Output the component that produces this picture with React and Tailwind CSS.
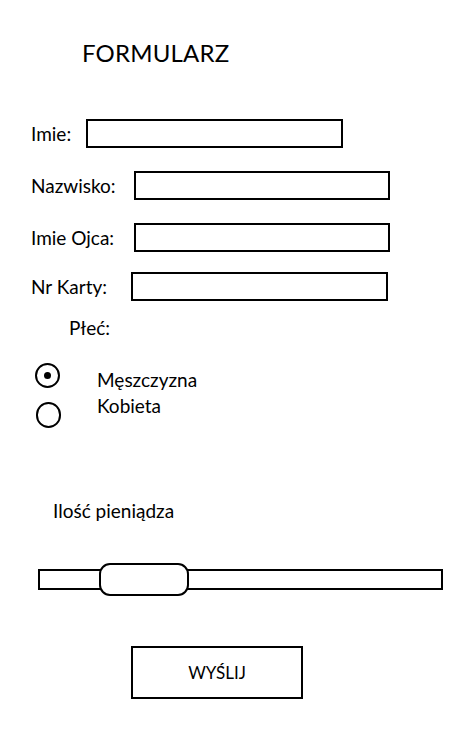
import { useState } from "react";

const Field = ({ label, labelW, boxW }) => (
  <div className="flex items-center h-[29px]">
    <span className="text-[19px] leading-none" style={{ width: labelW }}>{label}</span>
    <div className="h-[29px] border-2 border-black bg-white" style={{ width: boxW }} />
  </div>
);

const App = () => {
  const [sex, setSex] = useState("m");

  return (
    <div className="w-[471px] h-[741px] bg-white text-black font-['Lato',sans-serif] overflow-hidden">
      <h1 className="pt-[38px] pl-[82px] text-[24px] leading-[30px] tracking-[0.2px]">FORMULARZ</h1>

      {/* pola tekstowe */}
      <div className="pl-[31px] mt-[51px] flex flex-col">
        <Field label="Imie:" labelW={55} boxW={257} />
        <div className="mt-[23px]"><Field label="Nazwisko:" labelW={103} boxW={256} /></div>
        <div className="mt-[23px]"><Field label="Imie Ojca:" labelW={103} boxW={256} /></div>
        <div className="mt-[20px]"><Field label="Nr Karty:" labelW={100} boxW={257} /></div>
      </div>

      <div className="pl-[69px] mt-[16px] text-[19px] leading-[22px]">Płeć:</div>

      {/* plec */}
      <div className="flex mt-[24px] pl-[35px]">
        <div className="flex flex-col">
          <button onClick={() => setSex("m")} className="w-[25px] h-[25px] rounded-full border-2 border-black flex items-center justify-center">
            {sex === "m" && <span className="w-[7px] h-[7px] rounded-full bg-black" />}
          </button>
          <button onClick={() => setSex("k")} className="mt-[14px] ml-[1px] w-[25px] h-[26px] rounded-full border-2 border-black flex items-center justify-center">
            {sex === "k" && <span className="w-[7px] h-[7px] rounded-full bg-black" />}
          </button>
        </div>
        <div className="ml-[36px] flex flex-col text-[19px] leading-[26px] mt-[4px]">
          <span>Męszczyzna</span>
          <span>Kobieta</span>
        </div>
      </div>

      <div className="pl-[53px] mt-[72px] text-[19px] leading-[22px]">Ilość pieniądza</div>

      {/* suwak */}
      <div className="mt-[41px] pl-[38px] relative h-[33px] flex items-center">
        <div className="w-[405px] h-[21px] border-2 border-black" />
        <div className="absolute left-[99px] top-0 w-[90px] h-[33px] rounded-[11px] border-2 border-black bg-white" />
      </div>

      <div className="pl-[131px] mt-[50px]">
        <button className="w-[172px] h-[53px] border-2 border-black text-[17px] flex items-center justify-center">WYŚLIJ</button>
      </div>
    </div>
  );
};

export default App;
